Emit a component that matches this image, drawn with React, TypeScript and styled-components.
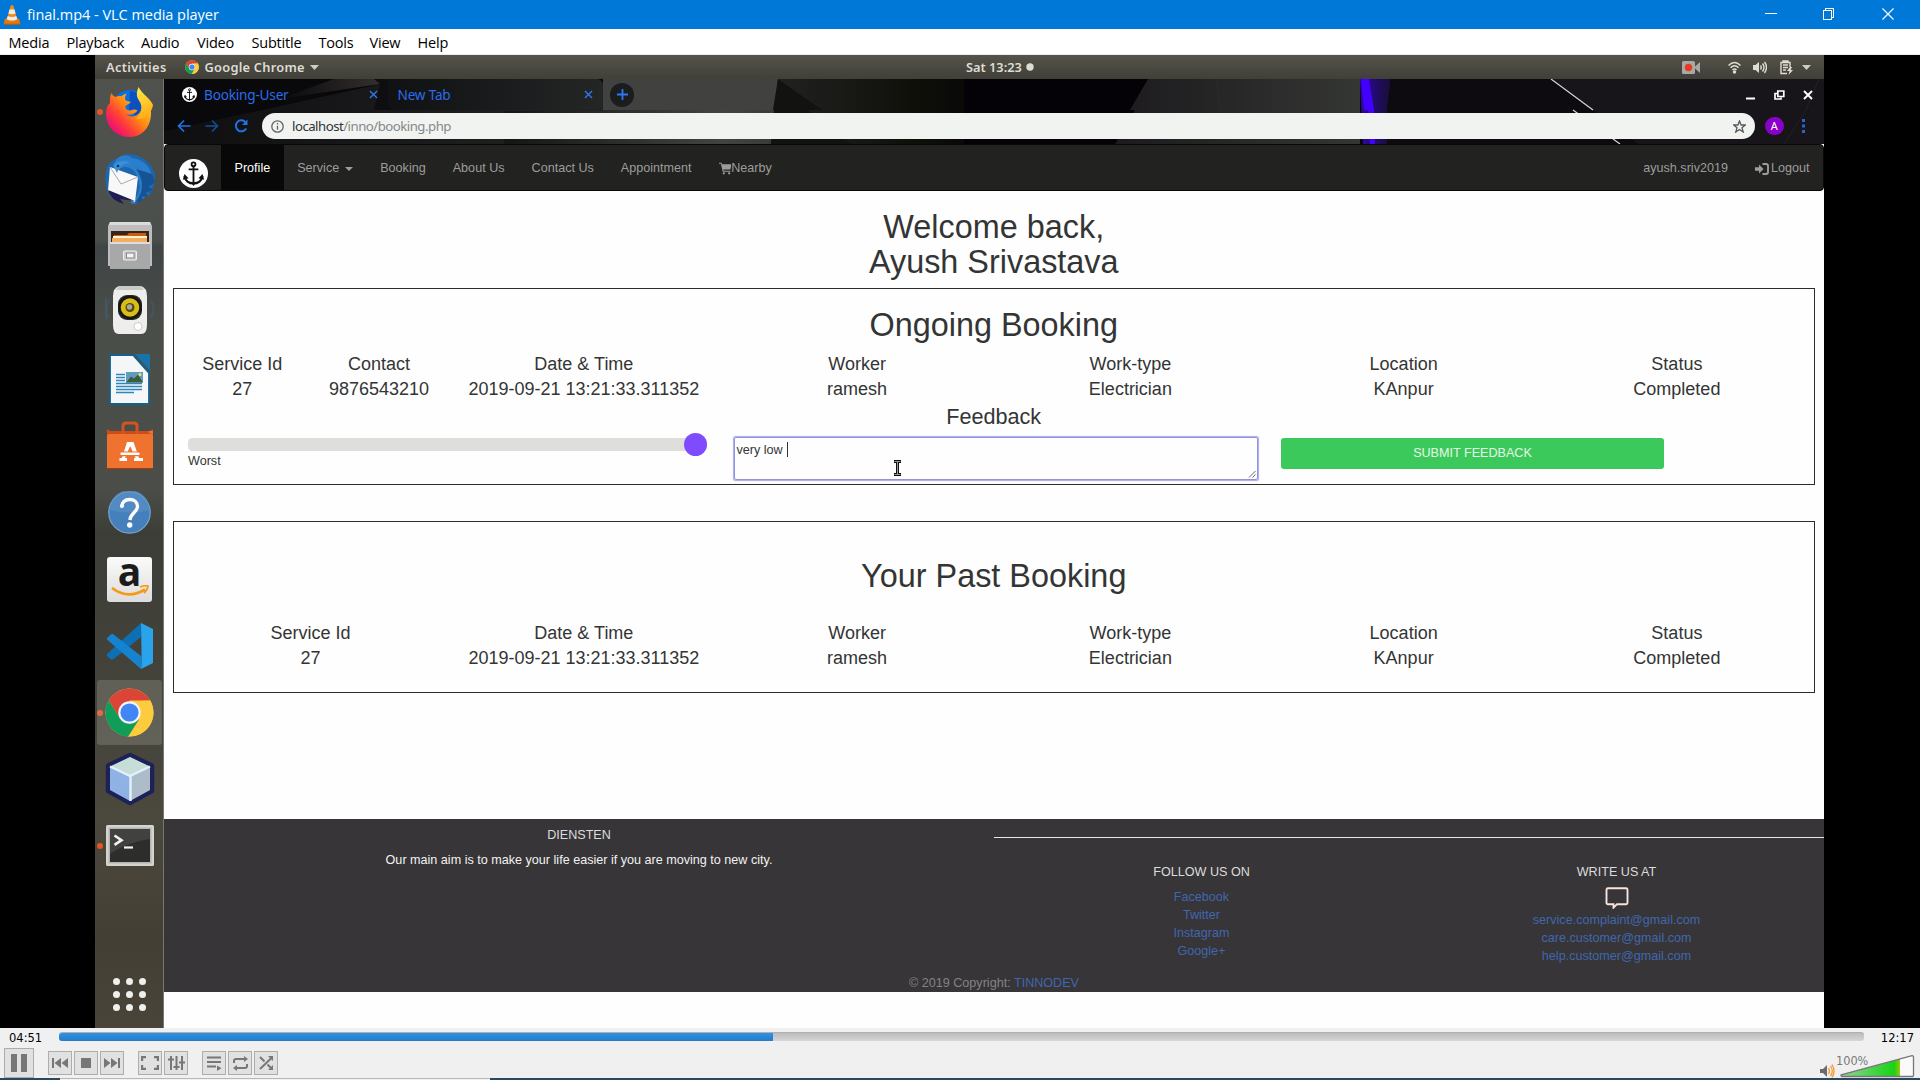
import React from "react";
import styled, { createGlobalStyle } from "styled-components";

const Global = createGlobalStyle`
  *, *::before, *::after { box-sizing: border-box; }
  body { margin: 0; background: #000; overflow: hidden; }
  h1, h2, h3, h4, p { margin: 0; font-weight: 400; }
  svg { display: block; flex: none; }
`;

const ui = `"Open Sans", "Noto Sans", sans-serif`;
const ubuntu = `"Noto Sans", "Open Sans", sans-serif`;
const arial = `"Liberation Sans", Arial, sans-serif`;

/* ---------- player window ---------- */

const Player = styled.div`
  width: 1920px;
  height: 1080px;
  display: flex;
  flex-direction: column;
  overflow: hidden;
  background: #f0f0f0;
`;

const TitleBar = styled.header`
  height: 29px;
  flex: none;
  display: flex;
  align-items: center;
  padding-left: 3px;
  background: #0078d7;
  color: #fff;
`;

const WindowTitle = styled.span`
  margin-left: 6px;
  flex: 1;
  font: 14.5px/29px ${ui};
  letter-spacing: -0.03px;
`;

const MenuBar = styled.nav`
  height: 26px;
  flex: none;
  display: grid;
  grid-template-columns: 58px 74.5px 56px 54.5px 67px 51px 48px 60px;
  padding: 1px 0 0 8.5px;
  background: #fff;
  border-bottom: 1px solid #ececec;
`;

const MenuItem = styled.span`
  font: 14.5px/25px ${ui};
  letter-spacing: -0.2px;
  color: #000;
`;

const VideoArea = styled.main`
  height: 973px;
  flex: none;
  padding: 0 96px 0 95px;
  background: #000;
`;

/* ---------- recorded desktop ---------- */

const Desktop = styled.div`
  height: 973px;
  display: flex;
  flex-direction: column;
  overflow: hidden;
`;

const TopPanel = styled.div`
  height: 24px;
  flex: none;
  display: grid;
  grid-template-columns: 860px auto 1fr;
  align-items: center;
  padding: 0 13px 0 11px;
  background: linear-gradient(#55534a, #403f38);
  color: #dfdcd5;
  font: 600 12.8px/24px ${ubuntu};
`;

const PanelGroup = styled.div<{ $end?: boolean }>`
  display: flex;
  align-items: center;
  justify-content: ${(p) => (p.$end ? "flex-end" : "flex-start")};
`;

const PanelText = styled.span<{ $track?: number }>`
  letter-spacing: ${(p) => p.$track ?? 0}px;
  white-space: nowrap;
`;

const Gap = styled.span<{ $w: number }>`
  width: ${(p) => p.$w}px;
  flex: none;
`;

const Workspace = styled.div`
  flex: 1;
  display: flex;
  min-height: 0;
`;

const Dock = styled.aside`
  width: 69px;
  flex: none;
  display: flex;
  flex-direction: column;
  border-right: 1px solid #77766f;
  background: linear-gradient(#50524d 0, #4b4f4b 160px, #3f4546 168px, #4a4e49 250px, #4b4e48 410px, #3c3d37 455px, #43433b 600px, #4b483d 740px, #443f34 860px, #484439 949px);
`;

const DockSlot = styled.div`
  height: 66.7px;
  flex: none;
  display: grid;
  grid-template-columns: 10px 1fr;
  align-items: center;
`;

const Running = styled.i<{ $on?: boolean }>`
  width: 6px;
  height: 6px;
  margin-left: 2px;
  border-radius: 3px;
  background: ${(p) => (p.$on ? "#e95420" : "transparent")};
`;

const DockTile = styled.div<{ $active?: boolean }>`
  height: 65px;
  margin-left: -8px;
  margin-right: 1px;
  border-radius: 3px;
  display: grid;
  place-items: center;
  background: ${(p) => (p.$active ? "rgba(190,188,178,.24)" : "transparent")};
`;

const AppsGrid = styled.div`
  margin: auto auto 17px 17.5px;
  display: grid;
  grid-template-columns: repeat(3, 7px);
  gap: 6px;
`;

const AppsDot = styled.i`
  width: 7px;
  height: 7px;
  border-radius: 50%;
  background: #efefec;
`;

/* ---------- browser ---------- */

const Browser = styled.section`
  flex: 1;
  display: flex;
  flex-direction: column;
  min-width: 0;
  background: #fefefe;
`;

const Chrome = styled.div`
  position: relative;
  height: 65px;
  flex: none;
  background: #0a090b;
`;

const Theme = styled.svg`
  position: absolute;
  inset: 0;
`;

const ChromeRows = styled.div`
  position: relative;
  font: 13.6px/31px ${ubuntu};
  color: #2c6bea;
`;

const TabStrip = styled.div`
  height: 31px;
  display: flex;
  align-items: center;
`;

const Tab = styled.div<{ $w: number; $left: number; $idle?: boolean }>`
  width: ${(p) => p.$w}px;
  height: 31px;
  display: flex;
  align-items: center;
  padding: 0 10px 0 ${(p) => p.$left}px;
  border-radius: 0 6px 8px 8px;
  background: ${(p) => (p.$idle ? "linear-gradient(90deg,#101113,#242525)" : "transparent")};
`;

const TabTitle = styled.span`
  flex: 1;
  padding-left: 7px;
  letter-spacing: -0.2px;
`;

const NewTab = styled.div`
  width: 24px;
  height: 24px;
  margin-left: 7px;
  border-radius: 12px;
  display: grid;
  place-items: center;
  background: #1b1c1e;
`;

const WindowButtons = styled.div`
  margin-left: auto;
  margin-right: 11px;
  display: flex;
  align-items: center;
  gap: 18.5px;
`;

const Toolbar = styled.div`
  height: 34px;
  display: flex;
  align-items: center;
  padding: 0 0 2px 13px;
  gap: 14px;
`;

const Omnibox = styled.div`
  width: 1493px;
  height: 25.5px;
  margin-left: -1px;
  display: flex;
  align-items: center;
  border-radius: 13px;
  padding: 0 9px 0 9px;
  background: #f1f3f1;
  color: #85888a;
  font-size: 13.2px;
  line-height: 25px;
`;

const Address = styled.span`
  flex: 1;
  padding-left: 8px;
  letter-spacing: -0.5px;
  b { font-weight: 400; color: #303234; }
`;

const Avatar = styled.div`
  width: 18.5px;
  height: 18.5px;
  margin-left: -4px;
  border-radius: 50%;
  background: #8b00c8;
  color: #fff;
  text-align: center;
  font: 11px/18px ${ubuntu};
`;

/* ---------- web page ---------- */

const Navbar = styled.nav`
  height: 47px;
  flex: none;
  display: flex;
  border: 1px solid #080808;
  border-radius: 4px;
  background: #222220;
  color: #9d9d9d;
  font: 12.6px/43px ${arial};
  padding-right: 13.5px;
`;

const Brand = styled.div`
  width: 56px;
  padding: 14px 0 0 13.5px;
`;

const NavLink = styled.a<{ $active?: boolean; $tight?: boolean }>`
  height: 45px;
  display: flex;
  align-items: center;
  padding: 2px ${(p) => (p.$tight ? 0 : 13.5)}px 0 13.5px;
  background: ${(p) => (p.$active ? "#080808" : "transparent")};
  color: ${(p) => (p.$active ? "#fff" : "#9d9d9d")};
`;

const Caret = styled.i`
  margin-left: 6px;
  border: 4px solid transparent;
  border-top-color: currentColor;
  border-bottom: 0;
`;

const Spacer = styled.span`
  flex: 1;
`;

const Page = styled.div`
  height: 628px;
  flex: none;
  padding: 19px 9.5px 0 9px;
  color: #333534;
  font-family: ${arial};
`;

const Greeting = styled.h1`
  text-align: center;
  font-size: 32.4px;
  line-height: 35.4px;
  height: 78px;
`;

const Panel = styled.section<{ $h: number; $top?: number; $pad: number }>`
  height: ${(p) => p.$h}px;
  margin-top: ${(p) => p.$top ?? 0}px;
  padding-top: ${(p) => p.$pad}px;
  border: 1px solid #2c2c2c;
`;

const PanelTitle = styled.h2<{ $after: number }>`
  text-align: center;
  font-size: 32.4px;
  line-height: 36px;
  margin-bottom: ${(p) => p.$after}px;
`;

const Columns = styled.div<{ $split?: boolean }>`
  display: grid;
  grid-template-columns: ${(p) => (p.$split ? "1fr 1fr repeat(5, 2fr)" : "repeat(6, 1fr)")};
  text-align: center;
  font-size: 18px;
  line-height: 25.3px;
`;

const Cell = styled.div`
  white-space: nowrap;
  min-width: 0;
`;

const FeedbackTitle = styled.h3`
  text-align: center;
  font-size: 21.6px;
  line-height: 28px;
  margin-bottom: 6px;
`;

const FeedbackForm = styled.div`
  display: grid;
  grid-template-columns: 519px 524px 383px;
  column-gap: 25px;
  padding-left: 14px;
  font-size: 12.6px;
  align-items: start;
`;

const Slider = styled.div`
  height: 13.5px;
  margin-top: 1px;
  border-radius: 4.5px;
  background: #dededd;
  display: flex;
  justify-content: flex-end;
  align-items: center;
`;

const Thumb = styled.i`
  width: 23px;
  height: 23px;
  flex: none;
  border-radius: 50%;
  background: #7f4bfd;
`;

const SliderLabel = styled.div`
  padding-top: 0.6px;
  line-height: 18px;
`;

const TextArea = styled.div`
  position: relative;
  height: 43px;
  margin: 0 -1.5px 0 1.5px;
  display: flex;
  align-items: flex-start;
  padding: 4px 2px;
  border: 1.5px solid #9193e0;
  box-shadow: 0 0 1px 0.5px #a9abee;
  border-radius: 2px;
  line-height: 16px;
`;

const TextCaret = styled.i`
  width: 1px;
  height: 15px;
  margin-left: 4px;
  background: #333;
`;

const Pointer = styled.svg`
  position: absolute;
  left: 158px;
  top: 22px;
`;

const Grip = styled.svg`
  position: absolute;
  right: 1px;
  bottom: 1px;
`;

const Submit = styled.button`
  height: 31px;
  margin-top: 1px;
  padding: 0;
  border: 0;
  border-radius: 3px;
  background: #3cc95c;
  color: #e4f8e6;
  font: 12.6px/31px ${arial};
`;

const Footer = styled.footer`
  height: 173px;
  flex: none;
  display: grid;
  grid-template-columns: 830px 415px 415px;
  grid-template-rows: 18px 137px 18px;
  background: #373537;
  color: #dcdcdc;
  text-align: center;
  font: 12.6px/18px ${arial};
`;

const About = styled.div`
  grid-row: 1 / 3;
  padding-top: 7px;
`;

const Aim = styled.p`
  padding-top: 7px;
  color: #f2f2f2;
`;

const Rule = styled.div`
  grid-column: 2 / 4;
  border-bottom: 1px solid #e6e6e6;
  height: 19px;
`;

const FooterColumn = styled.div<{ $links: number }>`
  padding-top: 26px;
  h4 { font-size: 12.6px; line-height: 18px; margin-bottom: ${(p) => p.$links}px; }
`;

const FooterLink = styled.a<{ $inline?: boolean }>`
  display: ${(p) => (p.$inline ? "inline" : "block")};
  color: #4067ae;
`;

const BubbleWrap = styled.div`
  display: flex;
  justify-content: center;
  height: 24px;
`;

const Copyright = styled.div`
  grid-column: 1 / 4;
  color: #858384;
`;

/* ---------- player controls ---------- */

const Controls = styled.div`
  height: 50px;
  flex: none;
  background: #f0f0f0;
`;

const SeekRow = styled.div`
  height: 20px;
  display: grid;
  grid-template-columns: 50px 1805px 50px;
  align-items: center;
  padding: 0 6px 0 9px;
  color: #000;
  font: 12.8px/20px "DejaVu Sans Condensed", "DejaVu Sans", sans-serif;
  white-space: nowrap;
`;

const Time = styled.span<{ $end?: boolean }>`
  text-align: ${(p) => (p.$end ? "right" : "left")};
`;

const Seek = styled.div`
  height: 9px;
  margin-bottom: 3px;
  border-radius: 3px;
  overflow: hidden;
  background: linear-gradient(#bcbcbc, #d6d6d6);
  border-top: 1px solid #b0b0b0;
`;

const Played = styled.div`
  width: 714px;
  height: 9px;
  border-radius: 3px 0 0 3px;
  background: linear-gradient(#3290e0, #2379c9);
`;

const ButtonRow = styled.div`
  height: 30px;
  display: flex;
  align-items: center;
  padding-left: 4px;
`;

const ButtonGroup = styled.div`
  display: flex;
  gap: 2px;
  margin-left: 14px;
`;

const ControlButton = styled.div<{ $large?: boolean }>`
  width: ${(p) => (p.$large ? 30 : 24)}px;
  height: ${(p) => (p.$large ? 30 : 24)}px;
  display: grid;
  place-items: center;
  border: 1px solid #adadad;
  background: #e1e1e1;
`;

const Volume = styled.div`
  margin-left: auto;
  margin-right: 5px;
  height: 30px;
  display: flex;
  align-items: flex-end;
  position: relative;
`;

const VolumeText = styled.span`
  position: absolute;
  left: 17px;
  top: 4px;
  color: #787878;
  font: 12.6px/18px "DejaVu Sans Condensed", "DejaVu Sans", sans-serif;
`;

const TaskbarEdge = styled.div`
  height: 2px;
  display: grid;
  grid-template-columns: 60px 430px 1fr;
`;

const EdgePart = styled.i<{ $light?: boolean }>`
  background: ${(p) => (p.$light ? "#f2f2f2" : "#2b485f")};
  border-top: ${(p) => (p.$light ? "1px solid #b8b8b8" : "0")};
`;

/* ---------- drawings ---------- */

const Cone = () => (
  <svg width="18" height="21" viewBox="0 0 18 21">
    <path d="M2 14.5h14l1.3 5.7H.7z" fill="#e77708" />
    <path d="M7.7 1.6Q9 .2 10.3 1.6L14.4 16Q9 19.2 3.6 16z" fill="#f28a13" />
    <path d="M6.5 5.6h5l1.1 3.8q-3.6 1.5-7.2 0zM4.7 12q4.3 1.9 8.6 0l.9 3.2q-5.2 2.6-10.4 0z" fill="#e9edf0" />
    <path d="M.7 20.2h16.6" stroke="#c25a00" />
  </svg>
);

const Anchor = ({ size }: { size: number }) => (
  <svg width={size} height={size} viewBox="0 0 30 30">
    <circle cx="15" cy="15" r="15" fill="#fff" />
    <g fill="none" stroke="#111" strokeWidth="1.9">
      <circle cx="15" cy="5.5" r="2" />
      <path d="M15 7.5v17M10 10.8h10" />
      <path d="M5.8 17.5c.6 5 4.7 7.8 9.2 7.8s8.6-2.8 9.2-7.8" strokeWidth="2.4" />
    </g>
    <path d="M4 21.5l1.700-6 4.200 4.400zM26 21.5l-1.700-6-4.200 4.400zM12.600 24.600h4.800L15 28z" fill="#111" />
  </svg>
);

const ChromeLogo = ({ size }: { size: number }) => (
  <svg width={size} height={size} viewBox="0 0 48 48">
    <circle cx="24" cy="24" r="23.5" fill="#fbc83a" />
    <path d="M3.6 12.3A23.5 23.5 0 0 1 44.4 12.3L24 13.3 14.5 29.5z" fill="#db4437" />
    <path d="M44.4 12.3H24L34 30 22.5 47.5A23.5 23.5 0 0 0 44.4 12.3z" fill="#fdcb3e" />
    <path d="M3.6 12.3L14.6 29.5 24 35l9.5-4.5L22.7 47.5A23.5 23.5 0 0 1 3.6 12.3z" fill="#109d58" />
    <circle cx="24" cy="24" r="11" fill="#f3f3f3" />
    <circle cx="24" cy="24" r="8.9" fill="#4285f4" />
  </svg>
);

const Firefox = () => (
  <svg width="50" height="52" viewBox="0 0 50 52">
    <defs>
      <linearGradient id="ffBody" x1="0.9" y1="0.1" x2="0.15" y2="0.8">
        <stop offset="0" stopColor="#ffd53a" />
        <stop offset=".45" stopColor="#ff8a12" />
        <stop offset=".75" stopColor="#ff3b3a" />
        <stop offset="1" stopColor="#ee1370" />
      </linearGradient>
      <linearGradient id="ffTail" x1="0" y1="0" x2="0.3" y2="1">
        <stop offset="0" stopColor="#fff04a" />
        <stop offset="1" stopColor="#ffad17" />
      </linearGradient>
    </defs>
    <circle cx="25" cy="22" r="18" fill="#0a6fe0" />
    <path d="M25 5a17 17 0 0 1 15 12l-8 14-8-8z" fill="#0b4fc0" />
    <path d="M6.5 7c.8 2 2 3.3 4 4 2-1 4-1.2 6-.7 1.5-1.3 3.5-2.3 5.2-2.5-1.5 2-2 4-1.5 6 1.5 1.5 3.2 1.9 5.5 2-.4 2.2-3.7 2.3-5.5 4.8.5 3 2.7 4.3 5.3 3.8 2.3-.5 4-1.6 7-.2-2.2 3.8-7.5 5.600-11.500 4C25 32.300 37.500 31.500 37 18l8.500 3C48.500 38 39 51 24.500 51 10.500 51 .8 40 1 27c0-5 2-8.200 4-10C4.700 13 5 9.500 6.500 7z" fill="url(#ffBody)" />
    <path d="M33.5 1C31.5 7 31 10 34 14.5c4.5 6.5 2.5 14-3.500 18.500 8 1.500 16-4.500 17.500-14C45 12 37 8 33.500 1z" fill="url(#ffTail)" />
  </svg>
);

const Thunderbird = () => (
  <svg width="54" height="54" viewBox="0 0 54 54">
    <path d="M4 15C1 25 2 38 8 45L46 44C51 38 53 28 51.5 21 48 9 36 2 24 2c-3 0-5 1-6 3C11 7 6 10 4 15z" fill="#1d66ad" />
    <path d="M11 12C14 3 24 1 29 6c10 1 20 9 20 20 1 12-8 22-17 26l-5-1C39 43 40 29 30 18 24 13 16 14 14 22z" fill="#297fcb" />
    <path d="M33 17l16 5 3 8-6 5 4 3-7 3 2 3-6 1 1 4-8 2c7-9 11-20 1-34z" fill="#155394" />
    <path d="M7 15l28 10-3 25L5 39z" fill="#f8f8f8" />
    <path d="M7 15l11 17 17-7" fill="none" stroke="#a7abb2" />
    <path d="M5 38l27 11-15-2 4 5c-8-2-14-7-16-14z" fill="#201c55" />
    <path d="M10 13c6-5 12-5 18-2-7 0-12 4-14 10z" fill="#3b8fd6" />
    <circle cx="15" cy="14" r="1.3" fill="#132b4c" />
  </svg>
);

const Files = () => (
  <svg width="46" height="50" viewBox="0 0 46 50">
    <path d="M3 1h40l2 4v40H1V5z" fill="#bdbdbd" />
    <path d="M3 1h40l1 3H2z" fill="#dbdbdb" />
    <path d="M4 10h38v14H4z" fill="#3a2417" />
    <path d="M7 14h13l2-2h17v4H7z" fill="#c95d15" />
    <path d="M5 17h35v5H5z" fill="#f3ad61" />
    <path d="M6 15h34v2H6z" fill="#fff1d0" />
    <path d="M3 21h40v27H3z" fill="#a8a8a8" />
    <path d="M3 21h40v2H3z" fill="#ddd" />
    <rect x="16.500" y="30" width="13" height="9" rx="1" fill="#c8c8c8" stroke="#eee" />
    <rect x="19.500" y="32" width="7.500" height="5" fill="#f3f3f3" stroke="#888" />
  </svg>
);

const Speaker = () => (
  <svg width="50" height="52" viewBox="0 0 50 52">
    <path d="M4 14q-5 9 0 18M46 14q5 9 0 18M1.500 12q-3 10 0 22" fill="none" stroke="#45576a" strokeWidth="1.500" />
    <path d="M14 0h22q6 2 6 10v29q0 9-6 9H14q-6 0-6-9V10q0-8 6-10z" fill="#eeeeec" />
    <path d="M14 0h22l3 4H11z" fill="#c9c9c7" />
    <rect x="13" y="9" width="24" height="25" rx="9" fill="#2b2b27" />
    <circle cx="25" cy="21.500" r="11.800" fill="#151511" />
    <circle cx="25" cy="21.500" r="9.300" fill="#d9bd16" />
    <circle cx="25" cy="21.500" r="4.500" fill="#544912" />
    <circle cx="24.500" cy="21" r="2.700" fill="#a8a8a0" />
    <circle cx="33" cy="40.500" r="4" fill="#fff" stroke="#ccc" />
  </svg>
);

const Writer = () => (
  <svg width="42" height="51" viewBox="0 0 42 51">
    <path d="M1 1h23l16 18v31H1z" fill="#f4f6f8" stroke="#14618f" strokeWidth="1.800" />
    <path d="M26 0h15v17z" fill="#1873a8" />
    <path d="M7 20.500h9M7 23.500h9M7 26.500h9M7 29.500h26M7 32.500h26M7 35.500h26M7 38.500h18" stroke="#2e86bb" strokeWidth="1.400" />
    <path d="M17 18h17v10.500H17z" fill="#5f9dbe" />
    <path d="M17 28.500l5-6 3 2 4-4 5 8z" fill="#3c5c3c" />
    <circle cx="31" cy="20.500" r="1.500" fill="#f4e25a" />
  </svg>
);

const Software = () => (
  <svg width="48" height="50" viewBox="0 0 48 50">
    <path d="M1 10h46v38H1z" fill="#f0722f" />
    <path d="M1 8l5 3-5 3zM47 8l-5 3 5 3zM1 10h46v3H1z" fill="#cc4d19" />
    <path d="M17 13V5q0-3 3-3h8q3 0 3 3v8" fill="none" stroke="#d2541f" strokeWidth="3" />
    <path d="M21 21h6.500l5.500 16h4v3h-9v-3h1.500L24.200 25 19 37h2v3h-7.500v-3H16z" fill="#fff" />
    <path d="M14 31h19l2 1.800-2 1.800H14z" fill="#fff" stroke="#f0722f" strokeWidth="1.200" />
    <path d="M1 47.500h46" stroke="#a4390e" />
  </svg>
);

const Help = () => (
  <svg width="43" height="43" viewBox="0 0 43 43">
    <circle cx="21.500" cy="21.500" r="20.700" fill="#4580bd" stroke="#77a5d0" strokeWidth="1.200" />
    <path d="M1.500 19a20 20 0 0 1 40 0q-20 5-40 0z" fill="#5c92c7" opacity=".6" />
    <path d="M14 16.200c-.4-5 3-7.700 7.500-7.700 5 0 8 3 8 7 0 5.500-7 6.500-7.600 13.500" fill="none" stroke="#fff" strokeWidth="3.300" />
    <circle cx="13.900" cy="14.900" r="2" fill="#fff" />
    <circle cx="21.700" cy="34" r="2.700" fill="#fff" />
  </svg>
);

const AmazonTile = styled.div`
  width: 45px;
  height: 45px;
  display: grid;
  grid-template-rows: 28px 17px;
  justify-items: center;
  border-radius: 3px;
  background: linear-gradient(#fbfbfb, #dcdcdc);
  color: #1b1b1b;
  font: 700 39px/31px "Open Sans", sans-serif;
`;

const AmazonLetter = styled.span`
  height: 28px;
  line-height: 27px;
`;

const Amazon = () => (
  <AmazonTile>
    <AmazonLetter>a</AmazonLetter>
    <svg width="40" height="17" viewBox="0 0 40 17">
      <path d="M2 3q16 12 33 1.500" fill="none" stroke="#f59a15" strokeWidth="2.700" />
      <path d="M30 2q5-2 8-1-.5 4-4 7" fill="none" stroke="#f59a15" strokeWidth="1.800" />
    </svg>
  </AmazonTile>
);

const Code = () => (
  <svg width="48" height="48" viewBox="0 0 48 48">
    <path d="M35 1v14L7 37.500H5L1 34v-2z" fill="#0f6fb4" />
    <path d="M1 16l4.500-4H7l28 22v13L1 17.500z" fill="#1583cf" />
    <path d="M35 1l12 6v34l-12 6q1-2 0-46z" fill="#29a4ec" />
  </svg>
);

const Cube = () => (
  <svg width="52" height="54" viewBox="0 0 52 54">
    <path d="M26 3L48 13.500V39L26 51 4 39V13.500z" fill="#b9cde4" stroke="#1c2157" strokeWidth="4.500" strokeLinejoin="round" />
    <path d="M26 5l20 9.500-20 9.500L6 14.500z" fill="#c6ddd8" />
    <path d="M6 14.500L26 24v25L6 38z" fill="#8fb2e4" />
    <path d="M46 14.500L26 24v25l20-11z" fill="#adbcc9" />
    <path d="M6 14.500L26 24l20-9.500M26.500 24v25" fill="none" stroke="#e3f1fc" strokeWidth="2.400" />
  </svg>
);

const Terminal = () => (
  <svg width="48" height="41" viewBox="0 0 48 41">
    <rect width="48" height="41" rx="1.500" fill="#d3d3cf" />
    <rect x="2.500" y="2.500" width="43" height="36" fill="#b6b6b1" />
    <rect x="4" y="4" width="40" height="33" fill="#2d2e2c" />
    <path d="M4 4h40v10Q22 17 4 29z" fill="#414240" />
    <path d="M8.500 10.500l7 4.700-7 4.700" fill="none" stroke="#f2f2f2" strokeWidth="2.600" />
    <path d="M18 22.500h9" stroke="#f2f2f2" strokeWidth="2.200" />
  </svg>
);

const ThemeArt = () => (
  <Theme width="1660" height="65" viewBox="0 0 1660 65">
    <defs>
      <linearGradient id="slate"><stop offset="0" stopColor="#151515" /><stop offset=".4" stopColor="#2c2c2c" /><stop offset=".8" stopColor="#434342" /><stop offset="1" stopColor="#393938" /></linearGradient>
      <linearGradient id="olive"><stop offset="0" stopColor="#222221" /><stop offset=".6" stopColor="#0f0f0a" /><stop offset="1" stopColor="#030205" /></linearGradient>
      <linearGradient id="mist"><stop offset="0" stopColor="#1c1a1d" /><stop offset="1" stopColor="#343633" /></linearGradient>
      <linearGradient id="violet"><stop offset="0" stopColor="#2f07a8" /><stop offset="1" stopColor="#170f30" /></linearGradient>
      <linearGradient id="shade"><stop offset="0" stopColor="#09080b" /><stop offset="1" stopColor="#33302c" /></linearGradient>
    </defs>
    <rect width="1660" height="65" fill="#08070a" />
    <path d="M55 40L216 5H616V65H0V52z" fill="url(#slate)" opacity=".5" />
    <path d="M0 0H210L216 5 55 40 0 52z" fill="#09080b" />
    <path d="M115 20L216 5 211 0H170z" fill="url(#shade)" />
    <path d="M210 0h20v31h-20l6-26z" fill="#0e0d0f" />
    <path d="M439 0H614L607 65H340V32h99z" fill="url(#slate)" />
    <path d="M439 0H614L609 31H439z" fill="#414140" />
    <path d="M614 0H850V65H607z" fill="url(#olive)" />
    <path d="M614 0L658 31H609zM610 31h34l43 34h-80z" fill="#121211" />
    <path d="M800 0h184l-18 31h5l-20 34H800z" fill="#040206" />
    <path d="M984 0h212v65H951l20-34h-5z" fill="url(#mist)" />
    <path d="M1052 0l5 31" stroke="#2c2c2c" />
    <path d="M1196 0h31l-4 31v34h-24z" fill="url(#violet)" />
    <path d="M1197 0h8l5 31 1 34h-5l-2-34h-4z" fill="#4400ff" />
    <path d="M1228 0h158l43 31 45 34h-251V31z" fill="#0d0b10" />
    <path d="M1387 0h273v65h-186z" fill="#17151a" />
    <path d="M1387 0l42 31M1409 31l47 34" stroke="#d7d4d8" strokeWidth="1.200" />
    <path d="M1620 65L1642 31 1655 0" stroke="#242127" fill="none" />
  </Theme>
);

const Cross = ({ size, color, w }: { size: number; color: string; w: number }) => (
  <svg width={size} height={size} viewBox="0 0 10 10">
    <path d="M1 1l8 8M9 1L1 9" stroke={color} strokeWidth={w} />
  </svg>
);

const stroke = { fill: "none", stroke: "#777", strokeWidth: 2 };

/* ---------- data ---------- */

const menu = ["Media", "Playback", "Audio", "Video", "Subtitle", "Tools", "View", "Help"];

const dock: { icon: React.ReactNode; running?: boolean; active?: boolean }[] = [
  { icon: <Firefox />, running: true },
  { icon: <Thunderbird /> },
  { icon: <Files /> },
  { icon: <Speaker /> },
  { icon: <Writer /> },
  { icon: <Software /> },
  { icon: <Help /> },
  { icon: <Amazon /> },
  { icon: <Code /> },
  { icon: <ChromeLogo size={49} />, running: true, active: true },
  { icon: <Cube /> },
  { icon: <Terminal />, running: true },
];

const booking = [
  ["Service Id", "27"],
  ["Contact", "9876543210"],
  ["Date & Time", "2019-09-21 13:21:33.311352"],
  ["Worker", "ramesh"],
  ["Work-type", "Electrician"],
  ["Location", "KAnpur"],
  ["Status", "Completed"],
];

const BookingRow = ({ rows, split }: { rows: string[][]; split?: boolean }) => (
  <Columns $split={split}>
    {rows.map(([label, value]) => (
      <Cell key={label}>
        <div>{label}</div>
        <div>{value}</div>
      </Cell>
    ))}
  </Columns>
);

export default function App() {
  return (
    <Player>
      <Global />
      <TitleBar>
        <Cone />
        <WindowTitle>final.mp4 - VLC media player</WindowTitle>
        <svg width="155" height="29" viewBox="0 0 155 29" fill="none" stroke="#fff" shapeRendering="crispEdges">
          <path d="M0 13.500h12M58.500 10.500h8v9h-8zM60.500 10V8.500h8v9H67" />
          <path d="M117.500 8.500l11 11M128.500 8.500l-11 11" shapeRendering="auto" strokeWidth="1.200" />
        </svg>
      </TitleBar>
      <MenuBar>{menu.map((m) => <MenuItem key={m}>{m}</MenuItem>)}</MenuBar>

      <VideoArea>
        <Desktop>
          <TopPanel>
            <PanelGroup>
              <PanelText $track={0.35}>Activities</PanelText>
              <Gap $w={18} />
              <ChromeLogo size={14} />
              <Gap $w={6} />
              <PanelText $track={0.25}>Google Chrome</PanelText>
              <Gap $w={5} />
              <svg width="9" height="5" viewBox="0 0 9 5"><path d="M0 0h9L4.500 5z" fill="#cfccc5" /></svg>
            </PanelGroup>
            <PanelGroup>
              <PanelText $track={0}>Sat 13:23</PanelText>
              <Gap $w={4} />
              <svg width="8" height="8"><circle cx="4" cy="4" r="3.700" fill="#dfdcd5" /></svg>
            </PanelGroup>
            <PanelGroup $end>
              <svg width="18" height="13" viewBox="0 0 18 13"><rect width="13" height="13" rx="1.500" fill="#aaa8a4" /><path d="M12 6.500L18 1v11z" fill="#aaa8a4" /><circle cx="6.500" cy="6.500" r="3.700" fill="#e23c25" /></svg>
              <Gap $w={28} />
              <svg width="13" height="13" viewBox="0 0 13 13" fill="none" stroke="#dfdcd5" strokeWidth="1.500"><path d="M.5 4.500Q6.500-1.500 12.500 4.500M2.500 6.800q4-4 8 0M4.500 9q2-2 4 0" /><circle cx="6.500" cy="11" r="1" fill="#dfdcd5" /></svg>
              <Gap $w={12} />
              <svg width="14" height="13" viewBox="0 0 14 13" fill="none" stroke="#dfdcd5" strokeWidth="1.400"><path d="M0 4h2.500L6 1v11L2.500 9H0z" fill="#dfdcd5" stroke="none" /><path d="M7.500 4.500q1.500 2 0 4M9.500 2.500q3 4 0 8M11.500 1q4 5.500 0 11" /></svg>
              <Gap $w={13} />
              <svg width="13" height="15" viewBox="0 0 13 15"><path d="M3 2.500V1h5v1.500M7 13.500H1v-11h9V7M3 5h5M3 7.500h5M3 10h3" fill="none" stroke="#dfdcd5" strokeWidth="1.400" /><path d="M10 7L7 11h2.500L8.500 15 13 10h-2.500L12 7z" fill="#dfdcd5" /></svg>
              <Gap $w={9} />
              <svg width="9" height="5" viewBox="0 0 9 5"><path d="M0 0h9L4.500 5z" fill="#cfccc5" /></svg>
            </PanelGroup>
          </TopPanel>

          <Workspace>
            <Dock>
              {dock.map((d, i) => (
                <DockSlot key={i}>
                  <Running $on={d.running} />
                  <DockTile $active={d.active}>{d.icon}</DockTile>
                </DockSlot>
              ))}
              <AppsGrid>{Array.from({ length: 9 }, (_, i) => <AppsDot key={i} />)}</AppsGrid>
            </Dock>

            <Browser>
              <Chrome>
                <ThemeArt />
                <ChromeRows>
                  <TabStrip>
                    <Tab $w={224} $left={18}>
                      <Anchor size={15} />
                      <TabTitle>Booking-User</TabTitle>
                      <Cross size={9} color="#2c78f0" w={1.5} />
                    </Tab>
                    <Tab $w={215} $left={2.5} $idle>
                      <TabTitle>New Tab</TabTitle>
                      <Cross size={9} color="#2c78f0" w={1.5} />
                    </Tab>
                    <NewTab>
                      <svg width="11" height="11"><path d="M5.500 0v11M0 5.500h11" stroke="#2c78f0" strokeWidth="1.800" /></svg>
                    </NewTab>
                    <WindowButtons>
                      <svg width="9" height="11"><path d="M0 9.500h9" stroke="#fff" strokeWidth="2" /></svg>
                      <svg width="11" height="10" viewBox="0 0 11 10" fill="none" stroke="#fff" strokeWidth="1.700"><path d="M3.800 1h6v5.500h-6zM3 3.500H1V9h6V7.500" /></svg>
                      <Cross size={10} color="#fff" w={1.9} />
                    </WindowButtons>
                  </TabStrip>
                  <Toolbar>
                    <svg width="14" height="14" viewBox="0 0 14 14" fill="none" stroke="#1f74e4" strokeWidth="1.700"><path d="M13.500 7H1.500M7 1.500L1.500 7 7 12.500" /></svg>
                    <svg width="14" height="14" viewBox="0 0 14 14" fill="none" stroke="#174d93" strokeWidth="1.700"><path d="M.5 7h12M7 1.500L12.500 7 7 12.500" /></svg>
                    <svg width="16" height="14" viewBox="0 0 16 14" fill="none" stroke="#1f74e4" strokeWidth="2"><path d="M13.200 9.500A5.500 5.500 0 1 1 12.500 3.200" /><path d="M14.500 .5v5.500H9z" fill="#1f74e4" stroke="none" /></svg>
                    <Omnibox>
                      <svg width="13" height="13" viewBox="0 0 13 13" fill="none" stroke="#606366" strokeWidth="1.300"><circle cx="6.500" cy="6.500" r="5.700" /><path d="M6.500 5.800v4M6.500 3v1.500" /></svg>
                      <Address><b>localhost</b>/inno/booking.php</Address>
                      <svg width="13" height="13" viewBox="0 0 13 13"><path d="M6.500 1l1.600 4h4.200L9 7.800l1.200 4.200-3.700-2.500L2.800 12 4 7.800.7 5h4.200z" fill="none" stroke="#55585a" strokeWidth="1.300" /></svg>
                    </Omnibox>
                    <Avatar>A</Avatar>
                    <svg width="9" height="15" viewBox="-4 0 9 15" fill="#2668c9"><rect width="3" height="3" /><rect y="5.500" width="3" height="3" /><rect y="11" width="3" height="3" /></svg>
                  </Toolbar>
                </ChromeRows>
              </Chrome>

              <Navbar>
                <Brand><Anchor size={29} /></Brand>
                <NavLink $active>Profile</NavLink>
                <NavLink>Service<Caret /></NavLink>
                <NavLink>Booking</NavLink>
                <NavLink>About Us</NavLink>
                <NavLink>Contact Us</NavLink>
                <NavLink>Appointment</NavLink>
                <NavLink>
                  <svg width="12.600" height="13" viewBox="0 0 13 13" fill="#9d9d9d"><path d="M0 .5h2.600l.5 1.500H13l-1.300 5.500H4.500l.3 1.300h7v1H3.900L1.900 1.700H0z" /><circle cx="5" cy="11.500" r="1.200" /><circle cx="10.500" cy="11.500" r="1.200" /></svg>
                  Nearby
                </NavLink>
                <Spacer />
                <NavLink>ayush.sriv2019</NavLink>
                <NavLink $tight>
                  <svg width="14" height="12" viewBox="0 0 14 12"><path d="M0 4.300h4V1.500L8.500 6 4 10.500V7.700H0z" fill="#9d9d9d" /><path d="M7.500 1H11q2 0 2 2v6q0 2-2 2H7.500" fill="none" stroke="#9d9d9d" strokeWidth="1.900" /></svg>
                  <Gap $w={2} />
                  Logout
                </NavLink>
              </Navbar>

              <Page>
                <Greeting>Welcome back,<br />Ayush Srivastava</Greeting>
                <Panel $h={197} $pad={18}>
                  <PanelTitle $after={9}>Ongoing Booking</PanelTitle>
                  <BookingRow rows={booking} split />
                  <FeedbackTitle>Feedback</FeedbackTitle>
                  <FeedbackForm>
                    <div>
                      <Slider><Thumb /></Slider>
                      <SliderLabel>Worst</SliderLabel>
                    </div>
                    <TextArea>
                      very low<TextCaret />
                      <Pointer width="9" height="16" viewBox="0 0 9 16"><path d="M1 1.500h7M1 14.500h7M4.500 1.500v13" stroke="#111" strokeWidth="3" /><path d="M1.500 1.500h6M1.500 14.500h6M4.500 2v12" stroke="#999" strokeWidth="1" /></Pointer>
                      <Grip width="8" height="8"><path d="M1 7.500L7.500 1M4.500 7.500l3-3" stroke="#666" /></Grip>
                    </TextArea>
                    <Submit>SUBMIT FEEDBACK</Submit>
                  </FeedbackForm>
                </Panel>
                <Panel $h={172} $top={36} $pad={36}>
                  <PanelTitle $after={27}>Your Past Booking</PanelTitle>
                  <BookingRow rows={booking.filter(([label]) => label !== "Contact")} />
                </Panel>
              </Page>

              <Footer>
                <About>
                  DIENSTEN
                  <Aim>Our main aim is to make your life easier if you are moving to new city.</Aim>
                </About>
                <Rule />
                <FooterColumn $links={7}>
                  <h4>FOLLOW US ON</h4>
                  {["Facebook", "Twitter", "Instagram", "Google+"].map((l) => <FooterLink key={l}>{l}</FooterLink>)}
                </FooterColumn>
                <FooterColumn $links={6}>
                  <h4>WRITE US AT</h4>
                  <BubbleWrap>
                    <svg width="24" height="22" viewBox="0 0 24 22"><path d="M3 1.200h18q1.500 0 1.500 1.500v13q0 1.500-1.500 1.500H12l-3.500 3.500v-3.500H3q-1.500 0-1.500-1.500v-13Q1.500 1.200 3 1.200z" fill="none" stroke="#f6e3dc" strokeWidth="1.900" /></svg>
                  </BubbleWrap>
                  {["service.complaint@gmail.com", "care.customer@gmail.com", "help.customer@gmail.com"].map((l) => <FooterLink key={l}>{l}</FooterLink>)}
                </FooterColumn>
                <Copyright>© 2019 Copyright: <FooterLink $inline>TINNODEV</FooterLink></Copyright>
              </Footer>
            </Browser>
          </Workspace>
        </Desktop>
      </VideoArea>

      <Controls>
        <SeekRow>
          <Time>04:51</Time>
          <Seek><Played /></Seek>
          <Time $end>12:17</Time>
        </SeekRow>
        <ButtonRow>
          <ControlButton $large>
            <svg width="16" height="18"><path d="M0 0h6v18H0zM10 0h6v18h-6z" fill="#777" /></svg>
          </ControlButton>
          <ButtonGroup>
            <ControlButton><svg width="16" height="10" fill="#777"><path d="M0 0h2v10H0zM9 0v10L2.500 5zM16 0v10L9.500 5z" /></svg></ControlButton>
            <ControlButton><svg width="10" height="10"><rect width="10" height="10" fill="#777" /></svg></ControlButton>
            <ControlButton><svg width="16" height="10" fill="#777"><path d="M14 0h2v10h-2zM0 0v10L6.500 5zM7 0v10l6.500-5z" /></svg></ControlButton>
          </ButtonGroup>
          <ButtonGroup>
            <ControlButton><svg width="18" height="14" {...stroke}><path d="M1 5V1h4M13 1h4v4M17 9v4h-4M5 13H1V9" strokeWidth="2.400" /></svg></ControlButton>
            <ControlButton><svg width="17" height="14" {...stroke}><path d="M3 0v14M8.500 0v14M14 0v14M0 3.500h6M5.500 11h6M11 6.500h6" /></svg></ControlButton>
          </ButtonGroup>
          <ButtonGroup>
            <ControlButton><svg width="15" height="15" {...stroke}><path d="M0 1.500h14M0 6h14M0 10.500h9" /><path d="M10 9.500v5.500l4.500-2.700z" fill="#777" stroke="none" /></svg></ControlButton>
            <ControlButton><svg width="15" height="15" {...stroke}><path d="M1 7V5q0-2 2-2h9M14 8v2q0 2-2 2H3" /><path d="M11 0l4 3-4 3zM4 9l-4 3 4 3z" fill="#777" stroke="none" /></svg></ControlButton>
            <ControlButton><svg width="15" height="14" {...stroke}><path d="M1 13L12.500 2M1 1l4.500 4.500M8.500 8.500l4 4" /><path d="M9 0h5v5zM9 14h5V9z" fill="#777" stroke="none" /></svg></ControlButton>
          </ButtonGroup>
          <Volume>
            <VolumeText>100%</VolumeText>
            <svg width="96" height="25" viewBox="0 0 96 25">
              <defs><linearGradient id="vol"><stop offset="0" stopColor="#8fd48f" /><stop offset=".9" stopColor="#17d317" /><stop offset="1" stopColor="#9bc410" /></linearGradient></defs>
              <path d="M1 16h3l4-4v12l-4-4H1z" fill="#6b6b6b" />
              <path d="M9.500 15q2 3 0 6M11.500 13q3.500 5 0 10M13 11.500q4 6.500 0 13" stroke="#f49a30" fill="none" strokeWidth="1.300" />
              <path d="M23 22.500L81 6v17.500H23z" fill="url(#vol)" />
              <path d="M81 6l13-3.500V23.500H81z" fill="#fafafa" />
              <path d="M22 22l71-19.300q1.500 0 1.500 1V22.500q0 1-1 1H23q-1.500-.5-1-1.500z" fill="none" stroke="#777" strokeWidth="1.300" />
            </svg>
          </Volume>
        </ButtonRow>
      </Controls>
      <TaskbarEdge><EdgePart /><EdgePart $light /><EdgePart /></TaskbarEdge>
    </Player>
  );
}
